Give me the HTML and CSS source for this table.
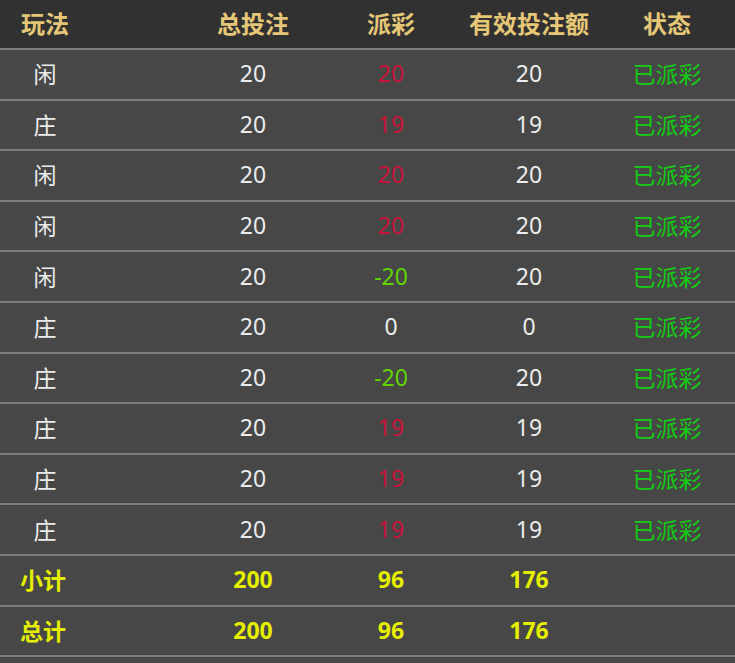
FILE: index.html
```html
<!DOCTYPE html>
<html lang="zh-CN">
<head>
  <meta charset="UTF-8">
  <meta name="viewport" content="width=device-width, initial-scale=1.0">
  <title>投注记录</title>
  <link rel="stylesheet" href="styles.css">
</head>
<body>
  <table class="bet-table">
    <colgroup>
      <col class="col-play">
      <col class="col-num">
      <col class="col-num">
      <col class="col-num">
      <col class="col-num">
    </colgroup>
    <thead>
      <tr>
        <th class="play">玩法</th>
        <th>总投注</th>
        <th>派彩</th>
        <th>有效投注额</th>
        <th>状态</th>
      </tr>
    </thead>
    <tbody>
      <tr><td class="play">闲</td><td>20</td><td class="win">20</td><td>20</td><td class="done">已派彩</td></tr>
      <tr><td class="play">庄</td><td>20</td><td class="win">19</td><td>19</td><td class="done">已派彩</td></tr>
      <tr><td class="play">闲</td><td>20</td><td class="win">20</td><td>20</td><td class="done">已派彩</td></tr>
      <tr><td class="play">闲</td><td>20</td><td class="win">20</td><td>20</td><td class="done">已派彩</td></tr>
      <tr><td class="play">闲</td><td>20</td><td class="lose">-20</td><td>20</td><td class="done">已派彩</td></tr>
      <tr><td class="play">庄</td><td>20</td><td>0</td><td>0</td><td class="done">已派彩</td></tr>
      <tr><td class="play">庄</td><td>20</td><td class="lose">-20</td><td>20</td><td class="done">已派彩</td></tr>
      <tr><td class="play">庄</td><td>20</td><td class="win">19</td><td>19</td><td class="done">已派彩</td></tr>
      <tr><td class="play">庄</td><td>20</td><td class="win">19</td><td>19</td><td class="done">已派彩</td></tr>
      <tr><td class="play">庄</td><td>20</td><td class="win">19</td><td>19</td><td class="done">已派彩</td></tr>
    </tbody>
    <tfoot>
      <tr><td class="play">小计</td><td>200</td><td>96</td><td>176</td><td></td></tr>
      <tr><td class="play">总计</td><td>200</td><td>96</td><td>176</td><td></td></tr>
    </tfoot>
  </table>
</body>
</html>
```

FILE: styles.css
```css
body {
  margin: 0;
  padding: 0;
  background-color: #474747;
  font-family: 'Noto Sans', 'Noto Sans CJK SC', sans-serif;
  color: #ececec;
}
.bet-table {
  width: 735px;
  border-collapse: collapse;
  table-layout: fixed;
}
.col-play {
  width: 184px;
}
.col-num {
  width: 138px;
}
th,
td {
  padding: 0;
  text-align: center;
  white-space: nowrap;
}
th {
  height: 44px;
  padding-bottom: 4px;
  background-color: #313131;
  color: #e5c777;
  font-size: 24px;
  font-weight: bold;
  border-bottom: 2px solid #7c7c7c;
}
td {
  height: 46.6px;
  padding-bottom: 2px;
  font-size: 23px;
  border-bottom: 2px solid #7c7c7c;
}
th.play,
td.play {
  padding-right: 94px;
}
.win {
  color: #c8143a;
}
.lose {
  color: #5fd400;
}
.done {
  color: #13cc13;
}
tfoot td {
  color: #e6ee00;
  font-weight: bold;
}
tfoot td.play {
  padding-right: 98px;
}
```
